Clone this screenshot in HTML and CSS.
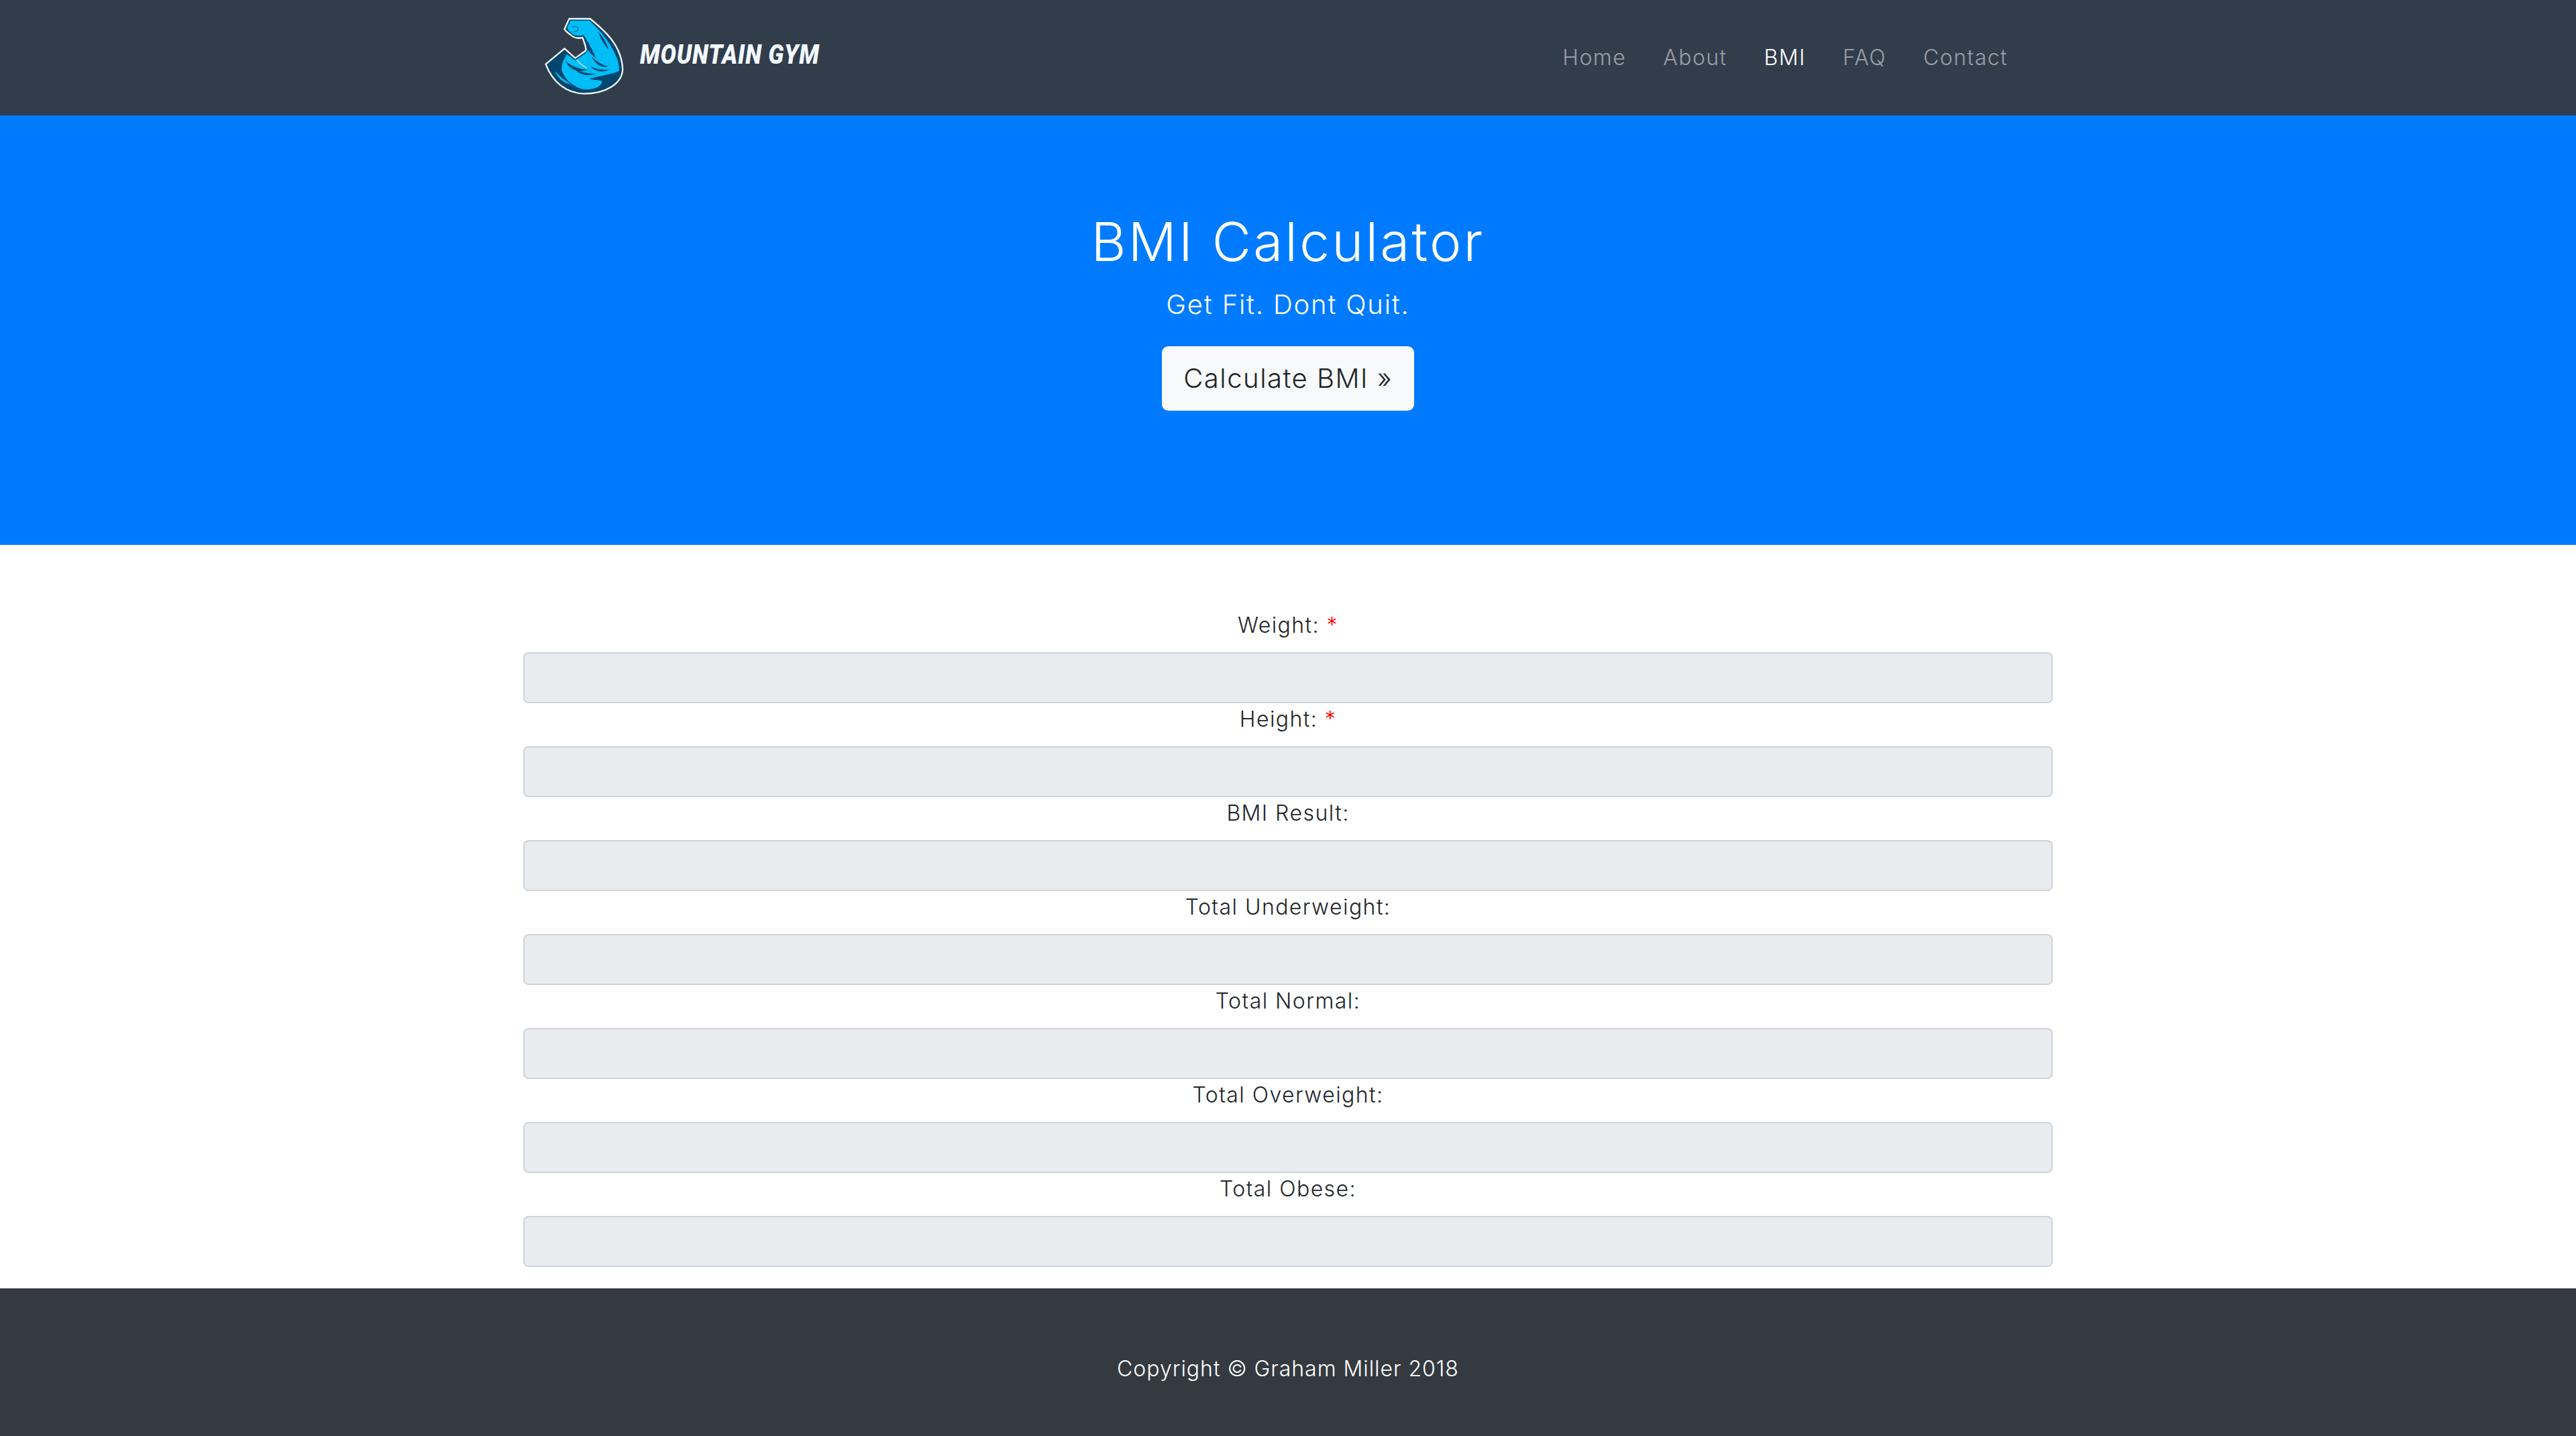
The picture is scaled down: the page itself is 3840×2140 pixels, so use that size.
FILE: index.html
```html
<!DOCTYPE html>
<html lang="en">
<head>
<meta charset="utf-8">
<title>BMI Calculator</title>
<link rel="stylesheet" href="styles.css">
</head>
<body>
<header class="topbar">
  <div class="topbar-inner">
    <a class="brand" href="#">
      <svg class="brand-mark" viewBox="90 70 365 360" aria-hidden="true">
        <path class="m-edge" d="M205 82 L299 82 C352 126 440 195 444 308 C442 372 368 417 272 417 C192 415 130 365 100 285 L184 215 L232 258 L277 226 C286 218 272 190 265 166 C248 170 226 168 212 154 C200 146 190 138 184 128 Z"/>
        <path class="m-fill" d="M196 120 L212 90 L295 90 C335 125 385 180 415 250 C424 272 430 295 428 316 C390 332 340 336 295 351 C320 356 345 354 352 362 C350 382 325 398 280 398 C240 396 185 360 172 312 C168 290 180 262 195 240 L232 268 L279 236 C292 226 286 200 278 165 L268 155 C250 160 228 158 218 148 C206 140 198 132 196 120 Z"/>
        <path class="m-fill" d="M140 315 C160 335 185 358 215 375 C185 372 155 348 140 315 Z"/>
        <path class="m-dark" d="M335 140 C358 165 375 195 380 220 C362 198 345 172 335 140 Z"/>
        <path class="m-dark" d="M272 165 C290 180 305 215 325 258 C305 243 290 228 283 212 C282 195 276 180 272 165 Z"/>
        <path class="m-dark" d="M188 268 C205 290 245 308 290 310 C245 322 205 312 188 268 Z"/>
        <path class="m-dark" d="M225 300 C255 320 290 328 325 328 C285 340 245 332 225 300 Z"/>
        <path class="m-dark" d="M305 250 C330 275 355 290 380 295 C350 302 320 285 305 250 Z"/>
        <path class="m-dark" d="M300 296 C330 310 360 312 385 308 C355 324 325 320 300 296 Z"/>
        <path class="m-crease" d="M240 266 C252 282 266 294 282 300"/>
        <path class="m-knuckle" d="M218 122 C228 112 246 116 244 130 C242 140 232 142 226 138"/>
      </svg>
      <span class="brand-name">MOUNTAIN GYM</span>
    </a>
    <nav class="links">
      <a class="link" href="#">Home</a>
      <a class="link" href="#">About</a>
      <a class="link link-active" href="#">BMI</a>
      <a class="link" href="#">FAQ</a>
      <a class="link" href="#">Contact</a>
    </nav>
  </div>
</header>

<section class="hero">
  <h1 class="hero-title">BMI Calculator</h1>
  <p class="hero-lead">Get Fit. Dont Quit.</p>
  <a class="hero-btn" href="#">Calculate BMI »</a>
</section>

<main class="form-wrap">
  <form class="form">
    <label class="field-label">Weight: <span class="req">*</span></label>
    <input class="field" type="text" disabled>
    <label class="field-label">Height: <span class="req">*</span></label>
    <input class="field" type="text" disabled>
    <label class="field-label">BMI Result:</label>
    <input class="field" type="text" disabled>
    <label class="field-label">Total Underweight:</label>
    <input class="field" type="text" disabled>
    <label class="field-label">Total Normal:</label>
    <input class="field" type="text" disabled>
    <label class="field-label">Total Overweight:</label>
    <input class="field" type="text" disabled>
    <label class="field-label">Total Obese:</label>
    <input class="field" type="text" disabled>
  </form>
</main>

<footer class="footer">Copyright © Graham Miller 2018</footer>
</body>
</html>
```

FILE: styles.css
```css
* { box-sizing: border-box; }
html, body { margin: 0; padding: 0; }
body {
  font-family: Inter, "Open Sans", sans-serif;
  font-size: 32px;
  line-height: 1.5;
  font-weight: 300;
  color: #212529;
  background: #fff;
  min-height: 2140px;
  display: flex;
  flex-direction: column;
}
a { text-decoration: none; }

.topbar { height: 172px; background: #323d4c; flex: none; }
.topbar-inner {
  width: 2280px;
  height: 100%;
  margin: 0 auto;
  display: flex;
  align-items: center;
  justify-content: space-between;
  padding: 0 67px 0 30px;
}
.brand { display: flex; align-items: center; gap: 22px; margin-top: -5px; }
.brand-mark { width: 122px; height: 120px; display: block; }
.m-edge { fill: #00466f; stroke: #f4f8fb; stroke-width: 7; stroke-linejoin: round; }
.m-fill { fill: #00bdf6; }
.m-dark { fill: #00466f; }
.m-crease { fill: none; stroke: #cfeefa; stroke-width: 4; stroke-linecap: round; }
.m-knuckle { fill: none; stroke: #0a86b8; stroke-width: 5; stroke-linecap: round; }
.brand-name {
  font-family: Roboto, "Liberation Sans", sans-serif;
  font-weight: 900;
  font-style: italic;
  font-size: 41px;
  line-height: 1;
  letter-spacing: 1px;
  color: #f2f8ff;
  white-space: nowrap;
  margin-bottom: 5px;
  width: 268px;
  transform: scaleX(.85);
  transform-origin: left center;
}
.links { display: flex; align-items: center; gap: 55px; letter-spacing: .045em; }
.link { color: rgba(255, 255, 255, .5); }
.link-active { color: #fff; }

.hero {
  height: 640px;
  flex: none;
  padding-top: 140px;
  background: #007bff;
  color: #fff;
  text-align: center;
}
.hero-title { margin: 0 0 16px; font-size: 80px; line-height: 96px; font-weight: 300; letter-spacing: .04em; }
.hero-lead { margin: 0 0 32px; font-size: 40px; line-height: 60px; font-weight: 300; letter-spacing: .045em; }
.hero-btn {
  display: inline-block;
  height: 96px;
  padding: 0 32px;
  font-size: 40px;
  line-height: 96px;
  letter-spacing: .038em;
  background: #f8f9fa;
  color: #212529;
  border-radius: 9.6px;
}

.form-wrap { flex: none; padding: 96px 0 32px; }
.form { width: 2280px; margin: 0 auto; display: flex; flex-direction: column; text-align: center; }
.field-label { display: block; height: 48px; margin-bottom: 16px; letter-spacing: .045em; }
.req { color: #f00; }
.field {
  display: block;
  width: 100%;
  height: 76px;
  background: #e9ecef;
  border: 2px solid #ced4da;
  border-radius: 8px;
  padding: 0;
}

.footer {
  flex: 1;
  padding-top: 96px;
  background: #343a40;
  color: #fff;
  text-align: center;
  letter-spacing: .03em;
}
```
